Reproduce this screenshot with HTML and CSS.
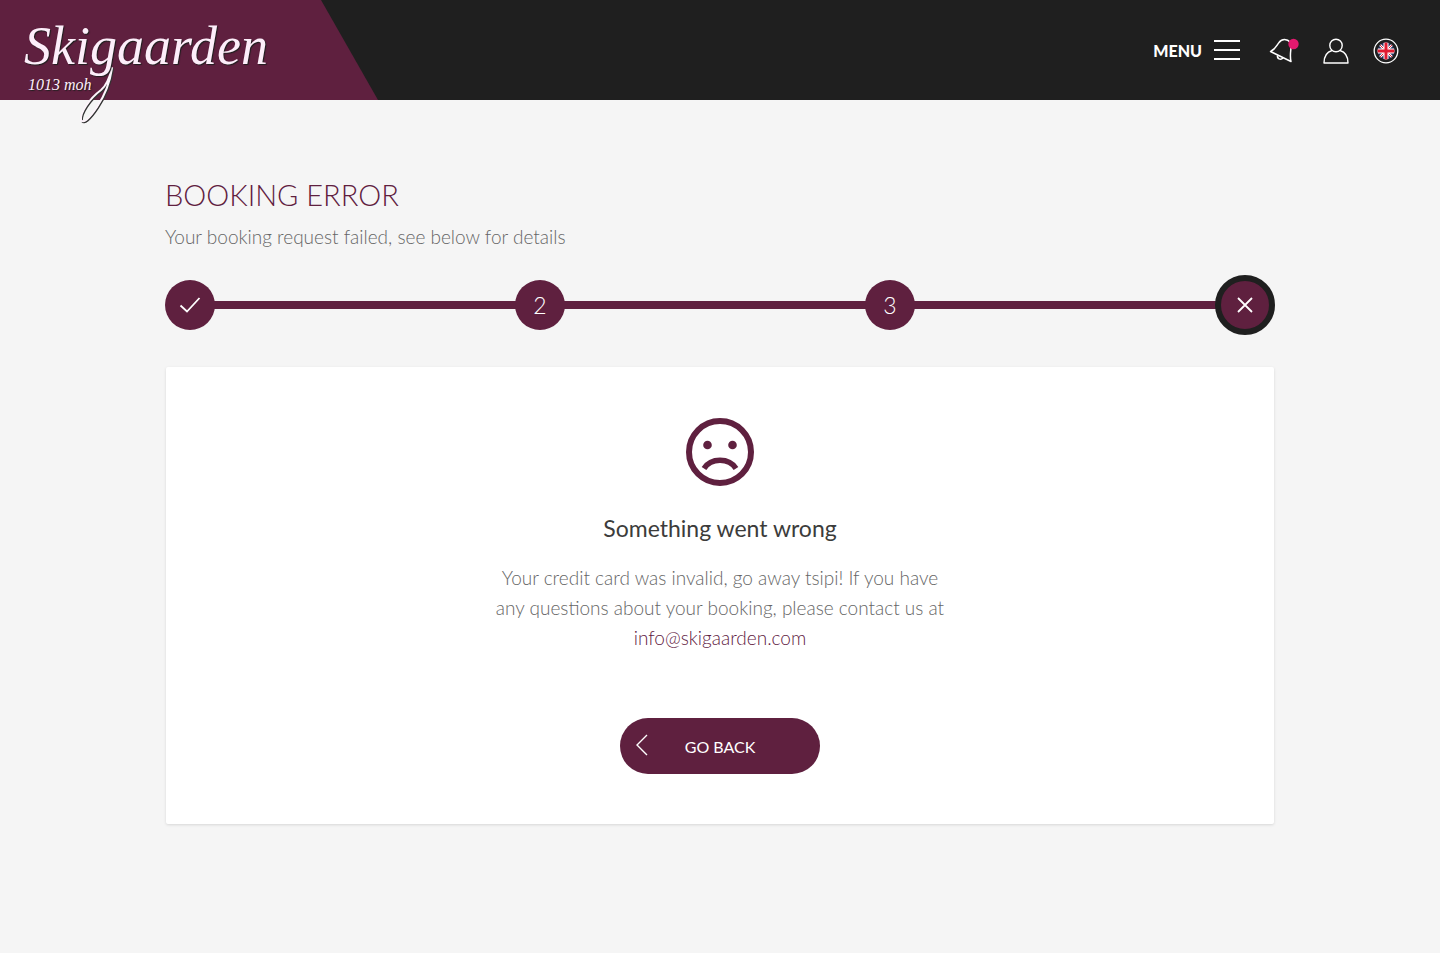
FILE: index.html
```html
<!DOCTYPE html>
<html lang="en">
<head>
  <meta charset="utf-8">
  <meta name="viewport" content="width=device-width, initial-scale=1">
  <title>Booking error – Skigaarden</title>
  <link rel="stylesheet" href="styles.css">
</head>
<body>
  <header class="site-header">
    <a class="brand" href="#" aria-label="Skigaarden 1013 moh">
      <svg class="brand-flourish" viewBox="0 0 80 70" aria-hidden="true">
        <path class="flourish-shadow" d="M53 13C51 27 46 40 38 52C30 64 24 69 22 65C21 58 30 44 42 35C47 31 50 25 53 13"/>
        <path class="flourish-line" d="M52 12C50 26 45 39 37 51C29 63 23 68 21 64C20 57 29 43 41 34C46 30 49 24 52 12"/>
      </svg>
      <span class="brand-name">Skigaarden</span>
      <span class="brand-height">1013 moh</span>
    </a>
    <nav class="header-nav" aria-label="Main">
      <button class="menu-button" type="button">
        <span>MENU</span>
        <svg width="26" height="22" viewBox="0 0 26 22" aria-hidden="true"><path d="M0 2h26M0 11h26M0 20h26" fill="none" stroke="#fff" stroke-width="2"/></svg>
      </button>
      <button class="icon-button" type="button" aria-label="Notifications">
        <svg width="32" height="28" viewBox="0 0 32 28" fill="none" stroke="#fff" stroke-width="1.5" stroke-linejoin="round" aria-hidden="true">
          <path d="M2.500 14.500C8 12 8.500 8.500 11 5.500C14 1.500 19 1.500 22.500 5.500C24.500 9 21 16 23 24.500Z"/>
          <path d="M9.500 18.500C9 21.500 12.500 23.500 15 21"/>
          <circle cx="25.500" cy="7" r="5.200" fill="#e2196e" stroke="none"/>
        </svg>
      </button>
      <button class="icon-button" type="button" aria-label="Account">
        <svg width="28" height="28" viewBox="0 0 28 28" fill="none" stroke="#fff" stroke-width="1.400" stroke-linejoin="round" aria-hidden="true">
          <circle cx="14" cy="8.500" r="6.200"/>
          <path d="M10 13.500C5 15 2 19.500 2 26H26C26 19.500 23 15 18 13.500"/>
        </svg>
      </button>
      <button class="icon-button" type="button" aria-label="Language: English">
        <svg width="28" height="28" viewBox="0 0 28 28" aria-hidden="true">
          <defs><clipPath id="flag"><circle cx="14" cy="14" r="8.500"/></clipPath></defs>
          <circle cx="14" cy="14" r="11.800" fill="none" stroke="#fff" stroke-width="1.300"/>
          <g clip-path="url(#flag)">
            <path fill="#28325f" d="M5 5h18v18H5z"/>
            <path d="M5 5l18 18M23 5L5 23" stroke="#fff" stroke-width="2.500"/>
            <path d="M5 5l18 18M23 5L5 23" stroke="#dc1f35" stroke-width="1"/>
            <path d="M14 5v18M5 14h18" stroke="#fff" stroke-width="5"/>
            <path d="M14 5v18M5 14h18" stroke="#e01a30" stroke-width="3"/>
          </g>
        </svg>
      </button>
    </nav>
  </header>

  <main class="page">
    <h1 class="page-title">BOOKING ERROR</h1>
    <p class="page-subtitle">Your booking request failed, see below for details</p>

    <ol class="steps">
      <li class="step" aria-label="Step 1, done">
        <svg width="24" height="24" viewBox="0 0 24 24" aria-hidden="true"><path d="M2.500 12.500l6.500 6L21.500 5" fill="none" stroke="#fff" stroke-width="1.800"/></svg>
      </li>
      <li class="step-line" aria-hidden="true"></li>
      <li class="step">2</li>
      <li class="step-line" aria-hidden="true"></li>
      <li class="step">3</li>
      <li class="step-line" aria-hidden="true"></li>
      <li class="step step-current" aria-label="Step 4, failed">
        <svg width="24" height="24" viewBox="0 0 24 24" aria-hidden="true"><path d="M5 5l14 14M19 5l-14 14" fill="none" stroke="#fff" stroke-width="1.800"/></svg>
      </li>
    </ol>

    <section class="card">
      <svg class="sad-face" width="68" height="68" viewBox="0 0 68 68" aria-hidden="true">
        <circle cx="34" cy="34" r="31" fill="none" stroke="#5f203f" stroke-width="6"/>
        <circle cx="21.500" cy="27" r="4.300" fill="#5f203f"/>
        <circle cx="46.500" cy="27" r="4.300" fill="#5f203f"/>
        <path d="M18 50.500C25 39.500 43 39.500 50 50.500" fill="none" stroke="#5f203f" stroke-width="5.500"/>
      </svg>
      <h2 class="card-title">Something went wrong</h2>
      <p class="card-text">Your credit card was invalid, go away tsipi! If you have<br>any questions about your booking, please contact us at<br><a class="card-link" href="mailto:info@skigaarden.com">info@skigaarden.com</a></p>
      <button class="back-button" type="button">
        <svg class="back-icon" width="14" height="22" viewBox="0 0 14 22" aria-hidden="true"><path d="M12 1L2 11l10 10" fill="none" stroke="#fff" stroke-width="1.400"/></svg>
        GO BACK
      </button>
    </section>
  </main>
</body>
</html>
```
FILE: styles.css
```css
* {
  box-sizing: border-box;
}

body {
  margin: 0;
  background: #f5f5f5;
  color: #666;
  font-family: Lato, "Open Sans", sans-serif;
  font-size: 19px;
  font-weight: 300;
}

button {
  padding: 0;
  border: 0;
  background: none;
  color: #fff;
  font-family: inherit;
  cursor: pointer;
}

.site-header {
  display: flex;
  justify-content: space-between;
  height: 100px;
  background: #1f1f1f;
}

.brand {
  position: relative;
  display: flex;
  flex-direction: column;
  width: 378px;
  padding: 16px 24px 0;
  color: #fdeefa;
  font-family: "Liberation Serif", serif;
  font-style: italic;
  font-weight: 400;
  text-decoration: none;
  text-shadow: 1px 1px 1px #1f1f1f;
}

.brand::before {
  content: "";
  position: absolute;
  inset: 0;
  background: #5f203f;
  clip-path: polygon(0 0, 321px 0, 100% 100%, 0 100%);
}

.brand-name {
  position: relative;
  font-size: 54px;
  line-height: 60px;
}

.brand-height {
  position: relative;
  padding-left: 4px;
  font-size: 16px;
  line-height: 18px;
}

.brand-flourish {
  position: absolute;
  left: 60px;
  top: 56px;
  width: 80px;
  height: 70px;
  fill: none;
  stroke-linecap: round;
}

.flourish-shadow {
  stroke: #333;
  stroke-width: 2;
}

.flourish-line {
  stroke: #fdf4fb;
  stroke-width: 2;
}

.header-nav {
  display: flex;
  align-items: center;
  padding-right: 40px;
}

.menu-button {
  display: flex;
  align-items: center;
  gap: 12px;
  margin-right: 28px;
  font-size: 16px;
  font-weight: 900;
}

.icon-button {
  display: flex;
  padding-top: 2px;
}

.icon-button + .icon-button {
  margin-left: 22px;
}

.page {
  width: 100%;
  max-width: 1150px;
  margin: 0 auto;
  padding: 76px 20px 128px;
}

.page-title {
  margin: 0;
  color: #5f203f;
  font-size: 29px;
  font-weight: 300;
  line-height: 38px;
}

.page-subtitle {
  margin: 8px 0 23px;
  line-height: 30px;
}

.steps {
  display: flex;
  align-items: center;
  margin: 0;
  padding: 0;
  list-style: none;
}

.step {
  display: flex;
  align-items: center;
  justify-content: center;
  width: 50px;
  height: 50px;
  margin: 5px 0;
  border-radius: 50%;
  background: #5f203f;
  color: #fff;
  font-size: 23px;
}

.step-current {
  width: 60px;
  height: 60px;
  margin: 0;
  border: 6px solid #1f1f1f;
}

.step-line {
  flex: 1;
  height: 8px;
  margin: 0 -1px;
  background: #5f203f;
}

.card {
  display: flex;
  flex-direction: column;
  align-items: center;
  margin: 32px 1px 0;
  padding: 51px 20px 50px;
  border-radius: 2px;
  background: #fff;
  box-shadow: 0 1px 3px rgba(0, 0, 0, 0.12);
  text-align: center;
}

.card-title {
  margin: 24px 0 17px;
  color: #3c3c3b;
  font-size: 23px;
  font-weight: 400;
  line-height: 36px;
}

.card-text {
  margin: 0 0 65px;
  line-height: 30px;
}

.card-link {
  color: #5f203f;
  text-decoration: none;
}

.back-button {
  position: relative;
  width: 200px;
  height: 56px;
  border-radius: 28px;
  background: #5f203f;
  font-size: 16px;
}

.back-icon {
  position: absolute;
  left: 15px;
  top: 16px;
}
```
